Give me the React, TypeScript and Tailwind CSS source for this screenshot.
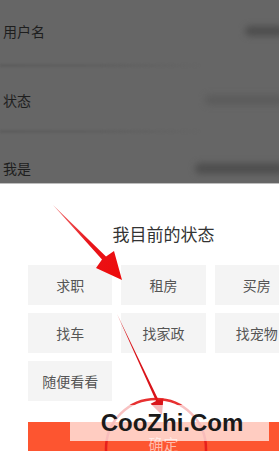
import React from "react";

const chips = ["求职", "租房", "买房", "找车", "找家政", "找宠物", "随便看看"];

export default function App() {
  return (
    <div
      className="relative w-[279px] h-[451px] overflow-hidden bg-white"
      style={{ fontFamily: '"Noto Sans CJK SC", "Noto Sans", sans-serif' }}
    >
      {/* dimmed form behind */}
      <div className="flex flex-col h-[184px] bg-[#666666] border-b border-[#bdbdbd]">
        <div className="relative flex items-center justify-between h-[67px] pb-[6px] pl-[3px]">
          <span className="text-[14px] leading-none text-[#1e1e1e]">用户名</span>
          <div className="w-[40px] h-[10px] rounded-full bg-[#4e4e4e] blur-[3px] -mr-[6px]" />
          <div className="absolute left-0 bottom-0 w-[200px] h-[3px] bg-gradient-to-r from-[#5d5d5d] via-[#606060] to-transparent blur-[1px]" />
        </div>
        <div className="relative flex items-center justify-between h-[66px] pl-[3px]">
          <span className="text-[14px] leading-none text-[#1e1e1e]">状态</span>
          <div className="w-[80px] h-[10px] rounded-full bg-[#5c5c5c] blur-[3px] -mr-[6px]" />
          <div className="absolute left-0 bottom-0 w-[200px] h-[3px] bg-gradient-to-r from-[#5d5d5d] via-[#606060] to-transparent blur-[1px]" />
        </div>
        <div className="flex items-center justify-between flex-1 pt-[20px] pl-[3px]">
          <span className="text-[14px] leading-none text-[#1e1e1e]">我是</span>
          <div className="w-[90px] h-[11px] rounded-full bg-[#4f4f4f] blur-[3px] -mr-[6px]" />
        </div>
      </div>

      {/* sheet */}
      <div className="flex flex-col pl-[28px] w-[299px]">
        <div className="w-[271px] mt-[38px] text-center text-[17px] leading-[24px] text-[#333333]">
          我目前的状态
        </div>
        <div className="grid grid-cols-3 w-[271px] gap-x-[9px] gap-y-[8px] mt-[19px]">
          {chips.map((c) => (
            <div
              key={c}
              className="flex items-center justify-center h-[40px] bg-[#f4f4f4] text-[14px] text-[#555555]"
            >
              {c}
            </div>
          ))}
        </div>
        <div className="flex items-center justify-center w-[271px] h-[44px] mt-[21px] bg-[#fd5530] text-[15px] text-white/60">
          确定
        </div>
      </div>

      {/* annotation overlay */}
      <svg className="absolute inset-0" width="279" height="451" viewBox="0 0 279 451">
        <defs>
          <linearGradient id="g1" x1="53" y1="205" x2="122" y2="280" gradientUnits="userSpaceOnUse">
            <stop offset="0" stopColor="#f07070" />
            <stop offset="0.5" stopColor="#e8161c" />
            <stop offset="1" stopColor="#ee0a0a" />
          </linearGradient>
        </defs>
        <polygon
          points="53,205 106,256.5 114,251 122,280 96,268 102,259.5"
          fill="url(#g1)"
        />
        <polygon
          points="117,314 158.5,400 163.4,398.2 162,415 150.6,403.8 156,401"
          fill="#d9141a"
        />
        <circle cx="156" cy="449" r="50" fill="none" stroke="#e41b1b" strokeWidth="2.5" opacity="0.9" />
      </svg>

      {/* watermark */}
      <div className="absolute left-[70px] top-[405px] w-[199px] h-[36px] bg-white/70 flex items-center justify-center pl-[5px]">
        <span
          className="text-[24px] font-bold text-[#1a1a1a] leading-none"
          style={{ fontFamily: '"Liberation Sans", Arial, sans-serif' }}
        >
          CooZhi.Com
        </span>
      </div>
    </div>
  );
}
